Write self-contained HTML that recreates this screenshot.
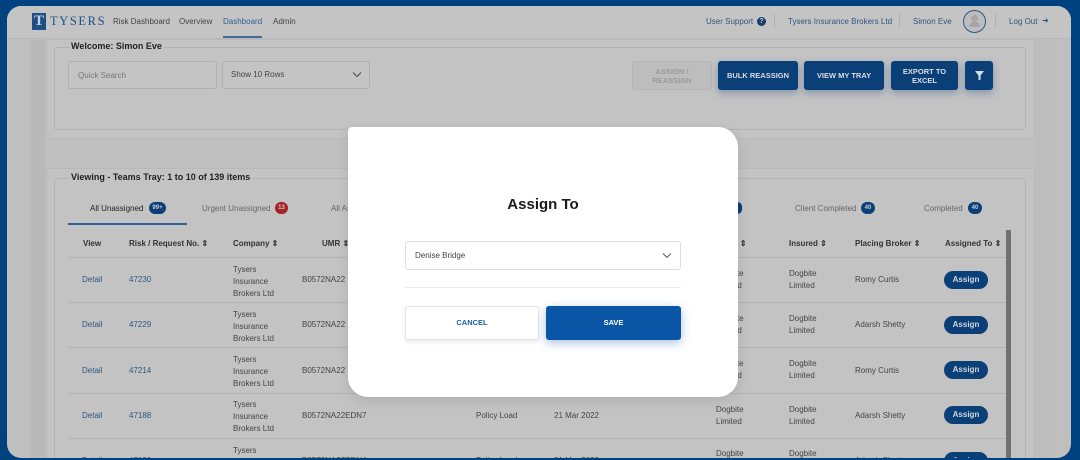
<!DOCTYPE html>
<html><head><meta charset="utf-8"><style>
*{box-sizing:border-box;margin:0;padding:0}
html,body{width:1080px;height:460px;overflow:hidden}
body{background:#00417f;font-family:"Liberation Sans",Arial,sans-serif;position:relative}
.a{position:absolute}
.inner{position:absolute;left:7px;top:6px;width:1064px;height:452px;background:#bfbfbf;border-radius:14px;overflow:hidden}
.wrap{position:absolute;left:-7px;top:-6px;width:1080px;height:460px}
.t{position:absolute;font-size:8px;color:#444;white-space:nowrap}
.lk{color:#2f5680}
.btn{position:absolute;top:61px;height:29px;background:#0b3f77;color:#d8dde4;font-size:7.5px;font-weight:bold;text-align:center;border-radius:3px;display:flex;align-items:center;justify-content:center;line-height:9px;box-shadow:0 3px 8px rgba(11,63,119,.35)}
.badge{position:absolute;width:15px;height:12px;border-radius:6px;background:#0b3f77;color:#ccd;font-size:6px;font-weight:bold;text-align:center;line-height:12px}
.as{position:absolute;left:944px;width:44px;height:18px;border-radius:9px;background:#0b3f77;color:#d0d6de;font-size:8px;font-weight:bold;text-align:center;line-height:18px}
.rl{position:absolute;left:68px;width:938px;height:1px;background:#b2b2b2}
</style></head><body>
<div class="inner"><div class="wrap">
<div class="a" style="left:0;top:0;width:1080px;height:39px;background:#c4c4c4;border-bottom:1px solid #b8b8b8"></div>
<div class="a" style="left:32px;top:13px;width:14px;height:17px;background:#1d4f86;color:#c9d3df;font-family:'Liberation Serif',serif;font-weight:bold;font-size:15px;text-align:center;line-height:17px">T</div>
<div class="a" style="left:50px;top:14px;font-family:'Liberation Serif',serif;font-size:12.5px;letter-spacing:1.6px;color:#1d4f86;line-height:15px">TYSERS</div>
<div class="t" style="left:113px;top:17px">Risk Dashboard</div>
<div class="t" style="left:179px;top:17px">Overview</div>
<div class="t lk" style="left:223px;top:17px;color:#2f5f94">Dashboard</div>
<div class="a" style="left:223px;top:36px;width:39px;height:2px;background:#3f6a99"></div>
<div class="t" style="left:273px;top:17px">Admin</div>
<div class="t lk" style="left:706px;top:17px">User Support</div>
<div class="a" style="left:757px;top:17px;width:9px;height:9px;border-radius:50%;background:#13406f;color:#ccc;font-size:7px;font-weight:bold;text-align:center;line-height:9px">?</div>
<div class="a" style="left:774px;top:14px;width:1px;height:14px;background:#b0b0b0"></div>
<div class="t lk" style="left:788px;top:17px">Tysers Insurance Brokers Ltd</div>
<div class="a" style="left:899px;top:14px;width:1px;height:14px;background:#b0b0b0"></div>
<div class="t lk" style="left:913px;top:17px">Simon Eve</div>
<div class="a" style="left:963px;top:10px;width:23px;height:23px;border-radius:50%;border:1.5px solid #2f5680;background:#bdbdbd"></div>
<div class="a" style="left:971px;top:15px;width:7px;height:7px;border-radius:50%;background:#a6a6a6"></div>
<div class="a" style="left:969px;top:22px;width:11px;height:5px;border-radius:5px 5px 1px 1px;background:#a6a6a6"></div>
<div class="a" style="left:995px;top:14px;width:1px;height:14px;background:#b0b0b0"></div>
<div class="t lk" style="left:1009px;top:17px">Log Out</div>
<div class="t lk" style="left:1042px;top:16px;font-size:8px">&#10140;</div>
<div class="a" style="left:31px;top:40px;width:14px;height:421px;background:#b9b9b9"></div>
<div class="a" style="left:1035px;top:40px;width:14px;height:421px;background:#bdbdbd"></div>
<div class="a" style="left:46px;top:39px;width:989px;height:100px;background:#c3c3c3;border-radius:0 0 3px 3px;border:1px solid #b9b9b9"></div>
<div class="a" style="left:54px;top:47px;width:972px;height:83px;border:1px solid #b3b3b3;border-radius:3px"></div>
<div class="t" style="left:69px;top:41px;background:#c3c3c3;padding:0 2px;font-weight:bold;font-size:9px;color:#222">Welcome: Simon Eve</div>
<div class="a" style="left:68px;top:61px;width:149px;height:28px;border:1px solid #b0b0b0;border-radius:3px;background:#c4c4c4"></div>
<div class="t" style="left:78px;top:71px;color:#777">Quick Search</div>
<div class="a" style="left:222px;top:61px;width:148px;height:28px;border:1px solid #b0b0b0;border-radius:3px;background:#c4c4c4"></div>
<div class="t" style="left:231px;top:70px;color:#444">Show 10 Rows</div>
<svg class="a" style="left:352px;top:71px" width="10" height="7"><path d="M1 1.5L5 5.5L9 1.5" stroke="#555" fill="none" stroke-width="1.2"/></svg>
<div class="btn" style="left:632px;width:80px;background:#bdbdbd;color:#9a9a9a;box-shadow:none;border:1px solid #b6b6b6">ASSIGN /<br>REASSIGN</div>
<div class="btn" style="left:718px;width:80px">BULK REASSIGN</div>
<div class="btn" style="left:804px;width:80px">VIEW MY TRAY</div>
<div class="btn" style="left:891px;width:67px">EXPORT TO<br>EXCEL</div>
<div class="btn" style="left:965px;width:28px"><svg width="9" height="9"><path d="M0 0H9L5.5 4.5V9H3.5V4.5Z" fill="#d8dde4"/></svg></div>
<div class="a" style="left:46px;top:168px;width:989px;height:300px;background:#c3c3c3;border:1px solid #b9b9b9;border-radius:3px"></div>
<div class="a" style="left:54px;top:178px;width:972px;height:300px;border:1px solid #b3b3b3;border-radius:3px"></div>
<div class="t" style="left:69px;top:172px;background:#c3c3c3;padding:0 2px;font-weight:bold;font-size:9px;color:#222">Viewing - Teams Tray: 1 to 10 of 139 items</div>
<div class="t" style="left:90px;top:204px;color:#222">All Unassigned</div>
<div class="badge" style="left:149px;top:202px;width:17px">99+</div>
<div class="a" style="left:68px;top:223px;width:119px;height:2px;background:#2f5f94"></div>
<div class="t" style="left:202px;top:204px;color:#666">Urgent Unassigned</div>
<div class="badge" style="left:275px;top:202px;width:13px;background:#a52323">13</div>
<div class="t" style="left:331px;top:204px;color:#666">All As</div>
<div class="badge" style="left:733px;top:202px;width:9px"></div>
<div class="t" style="left:795px;top:204px;color:#666">Client Completed</div>
<div class="badge" style="left:861px;top:202px;width:14px">40</div>
<div class="t" style="left:924px;top:204px;color:#666">Completed</div>
<div class="badge" style="left:968px;top:202px;width:14px">40</div>
<div class="t" style="left:83px;top:239px;font-weight:bold;color:#333">View</div>
<div class="t" style="left:129px;top:239px;font-weight:bold;color:#333">Risk / Request No. &#8661;</div>
<div class="t" style="left:233px;top:239px;font-weight:bold;color:#333">Company &#8661;</div>
<div class="t" style="left:322px;top:239px;font-weight:bold;color:#333">UMR &#8661;</div>
<div class="t" style="left:735px;top:239px;font-weight:bold;color:#333">t &#8661;</div>
<div class="t" style="left:789px;top:239px;font-weight:bold;color:#333">Insured &#8661;</div>
<div class="t" style="left:855px;top:239px;font-weight:bold;color:#333">Placing Broker &#8661;</div>
<div class="t" style="left:945px;top:239px;font-weight:bold;color:#333">Assigned To &#8661;</div>
<div class="rl" style="top:257px"></div>
<div class="rl" style="top:302px"></div>
<div class="rl" style="top:347px"></div>
<div class="rl" style="top:393px"></div>
<div class="rl" style="top:438px"></div>
<div class="a" style="left:1006px;top:230px;width:5px;height:230px;background:#707070"></div>
<div class="t lk" style="left:82px;top:275px">Detail</div><div class="t lk" style="left:129px;top:275px">47230</div>
<div class="t" style="left:233px;top:264px;line-height:12px">Tysers<br>Insurance<br>Brokers Ltd</div><div class="t" style="left:302px;top:275px">B0572NA22</div>
<div class="t" style="left:716px;top:268px;line-height:12px">Dogbite<br>Limited</div>
<div class="t" style="left:789px;top:268px;line-height:12px">Dogbite<br>Limited</div><div class="t" style="left:855px;top:275px">Romy Curtis</div><div class="as" style="top:271px">Assign</div>
<div class="t lk" style="left:82px;top:320px">Detail</div><div class="t lk" style="left:129px;top:320px">47229</div>
<div class="t" style="left:233px;top:309px;line-height:12px">Tysers<br>Insurance<br>Brokers Ltd</div><div class="t" style="left:302px;top:320px">B0572NA22</div>
<div class="t" style="left:716px;top:313px;line-height:12px">Dogbite<br>Limited</div>
<div class="t" style="left:789px;top:313px;line-height:12px">Dogbite<br>Limited</div><div class="t" style="left:855px;top:320px">Adarsh Shetty</div><div class="as" style="top:316px">Assign</div>
<div class="t lk" style="left:82px;top:366px">Detail</div><div class="t lk" style="left:129px;top:366px">47214</div>
<div class="t" style="left:233px;top:354px;line-height:12px">Tysers<br>Insurance<br>Brokers Ltd</div><div class="t" style="left:302px;top:366px">B0572NA22</div>
<div class="t" style="left:716px;top:358px;line-height:12px">Dogbite<br>Limited</div>
<div class="t" style="left:789px;top:358px;line-height:12px">Dogbite<br>Limited</div><div class="t" style="left:855px;top:366px">Romy Curtis</div><div class="as" style="top:361px">Assign</div>
<div class="t lk" style="left:82px;top:411px">Detail</div><div class="t lk" style="left:129px;top:411px">47188</div>
<div class="t" style="left:233px;top:399px;line-height:12px">Tysers<br>Insurance<br>Brokers Ltd</div><div class="t" style="left:302px;top:411px">B0572NA22EDN7</div>
<div class="t" style="left:476px;top:411px">Policy Load</div><div class="t" style="left:554px;top:411px">21 Mar 2022</div>
<div class="t" style="left:716px;top:404px;line-height:12px">Dogbite<br>Limited</div>
<div class="t" style="left:789px;top:404px;line-height:12px">Dogbite<br>Limited</div><div class="t" style="left:855px;top:411px">Adarsh Shetty</div><div class="as" style="top:406px">Assign</div>
<div class="t lk" style="left:82px;top:456px">Detail</div><div class="t lk" style="left:129px;top:456px">47190</div>
<div class="t" style="left:233px;top:445px;line-height:12px">Tysers<br>Insurance</div><div class="t" style="left:302px;top:456px">B0572NA22EDN4</div>
<div class="t" style="left:476px;top:456px">Policy Load</div><div class="t" style="left:554px;top:456px">21 Mar 2022</div>
<div class="t" style="left:716px;top:449px">Dogbite</div><div class="t" style="left:789px;top:449px">Dogbite</div><div class="t" style="left:855px;top:456px">Adarsh Shetty</div><div class="as" style="top:452px">Assign</div>
<div class="a" style="left:348px;top:127px;width:390px;height:270px;background:#fff;border-radius:4px 20px 20px 20px;box-shadow:0 4px 12px rgba(0,0,0,.1)"></div>
<div class="a" style="left:348px;top:196px;width:390px;text-align:center;font-size:15px;font-weight:bold;color:#1a1a1a">Assign To</div>
<div class="a" style="left:405px;top:241px;width:276px;height:29px;border:1px solid #dedede;border-radius:3px"></div>
<div class="a" style="left:415px;top:251px;font-size:8px;color:#444">Denise Bridge</div>
<svg class="a" style="left:662px;top:252px" width="10" height="7"><path d="M1 1.5L5 5.5L9 1.5" stroke="#666" fill="none" stroke-width="1.1"/></svg>
<div class="a" style="left:405px;top:287px;width:276px;height:1px;background:#ececec"></div>
<div class="a" style="left:405px;top:306px;width:134px;height:34px;border:1px solid #e4e4e4;border-radius:3px;box-shadow:0 2px 5px rgba(0,0,0,.08);text-align:center;line-height:32px;font-size:7.5px;font-weight:bold;color:#1e5fa6">CANCEL</div>
<div class="a" style="left:546px;top:306px;width:135px;height:34px;background:#0a55a6;border-radius:3px;box-shadow:0 3px 10px rgba(10,85,166,.35);text-align:center;line-height:34px;font-size:7.5px;font-weight:bold;color:#fff">SAVE</div>
</div></div>
</body></html>
